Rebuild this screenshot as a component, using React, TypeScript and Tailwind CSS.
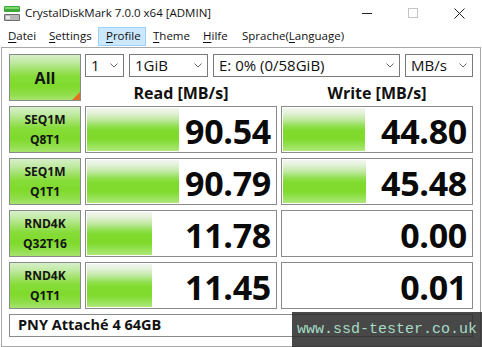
import React from "react";

const Chevron = () => (
  <svg width="8" height="5" viewBox="0 0 8 5" className="shrink-0">
    <polyline points="0.5,0.5 4,4 7.5,0.5" fill="none" stroke="#6a6a6a" strokeWidth="1" />
  </svg>
);

function Combo({ w, text }: { w: string; text: string }) {
  return (
    <div className={`${w} h-[23px] border border-[#7a7a7a] bg-white flex items-center justify-between pl-[5px] pr-[5px]`}>
      <span className="text-[15px] leading-none text-[#111]">{text}</span>
      <Chevron />
    </div>
  );
}

const barBg =
  "bg-[linear-gradient(180deg,#f3f6f1_0%,#e2f1d8_12%,#bfe99e_28%,#96e05a_40%,#80db2e_52%,#7fda2c_72%,#93e150_86%,#aee97c_100%)]";
const labelBg =
  "bg-[linear-gradient(180deg,#d6efc8_0%,#c2eba6_15%,#a2e26c_32%,#86dc38_48%,#7fda2c_70%,#8fde48_86%,#a4e46c_100%)]";

function Label({ a, b }: { a: string; b: string }) {
  return (
    <div className={`h-[47px] border border-[#8a8a8a] ${labelBg} flex flex-col items-center justify-center text-[12px] font-bold text-[#141414]`}>
      <span className="leading-[20px]">{a}</span>
      <span className="leading-[20px]">{b}</span>
    </div>
  );
}

function Meter({ value, bar }: { value: string; bar: number }) {
  return (
    <div className="relative h-[47px] border border-[#8a8a8a] bg-white p-[1px]">
      <div className={`h-full ${barBg}`} style={{ width: `${bar}px` }} />
      <div className="absolute inset-0 flex items-center justify-end pr-[5px] pt-[3px]">
        <span className="text-[34px] font-bold leading-none text-[#0a0a0a] tracking-[-0.3px]">{value}</span>
      </div>
    </div>
  );
}

function MenuItem({ w, pre, u, post, active }: { w: string; pre?: string; u: string; post: string; active?: boolean }) {
  return (
    <div
      className={`${w} h-[19px] flex items-center pl-[7px] pb-[2px] ${
        active ? "bg-[#cce8ff] border border-[#99d1ff] pl-[6px]" : ""
      }`}
    >
      <span className="text-[11.5px] leading-none text-[#111] whitespace-nowrap">
        {pre}
        <span className="underline underline-offset-[2px] decoration-[1px]">{u}</span>
        {post}
      </span>
    </div>
  );
}

export default function App() {
  return (
    <div className="relative w-[482px] h-[347px] bg-white overflow-hidden font-['Open_Sans','Noto_Sans',sans-serif]">
      {/* Title bar */}
      <div className="h-[26px] flex items-center">
        <svg width="17" height="17" viewBox="0 0 17 17" className="ml-[4px]">
          <rect x="0" y="1" width="16" height="6" rx="1" fill="#3da83a" />
          <rect x="1" y="2" width="14" height="2" fill="#7fd86a" />
          <rect x="0" y="9" width="16" height="7" rx="1" fill="#6e6e6e" />
          <rect x="1" y="10" width="14" height="5" fill="#b8b8b8" />
          <rect x="2" y="11" width="4" height="3" fill="#e8e8e8" />
        </svg>
        <span className="ml-[4px] text-[11.5px] leading-none text-[#111]">CrystalDiskMark 7.0.0 x64 [ADMIN]</span>
        <div className="ml-auto flex items-center h-full">
          <div className="w-[46px] h-full flex items-center justify-center">
            <div className="w-[10px] h-[1px] bg-[#222]" />
          </div>
          <div className="w-[46px] h-full flex items-center justify-center">
            <div className="w-[10px] h-[10px] border border-[#c4c4c4]" />
          </div>
          <div className="w-[46px] h-full flex items-center justify-center">
            <svg width="11" height="11" viewBox="0 0 11 11">
              <path d="M0.5 0.5 L10.5 10.5 M10.5 0.5 L0.5 10.5" stroke="#222" strokeWidth="1" />
            </svg>
          </div>
        </div>
      </div>

      {/* Menu bar */}
      <div className="h-[21px] flex items-start pt-[1px] pl-[1px]">
        <MenuItem w="w-[41px]" u="D" post="atei" />
        <MenuItem w="w-[56px]" u="S" post="ettings" />
        <MenuItem w="w-[48px]" u="P" post="rofile" active />
        <MenuItem w="w-[50px]" u="T" post="heme" />
        <MenuItem w="w-[39px]" u="H" post="ilfe" />
        <MenuItem w="w-[115px]" pre="Sprache(" u="L" post="anguage)" />
      </div>

      {/* Client area */}
      <div className="ml-[1px] w-[480px] h-[300px] border border-[#a8a8a8] pt-[6px] pl-[7px]">
        <div className="grid grid-cols-[72px_192px_192px] gap-x-[4px] gap-y-[5px] auto-rows-[47px]">
          {/* All button */}
          <div className={`relative h-[47px] border border-[#8a8a8a] ${labelBg} flex items-center justify-center`}>
            <span className="text-[16px] font-bold leading-none text-[#141414]">All</span>
            <svg width="8" height="8" viewBox="0 0 8 8" className="absolute right-0 bottom-0">
              <polygon points="8,0 8,8 0,8" fill="#e2731e" />
            </svg>
          </div>
          <div className="col-span-2 flex flex-col">
            <div className="flex gap-x-[5px]">
              <Combo w="w-[39px]" text="1" />
              <Combo w="w-[79px]" text="1GiB" />
              <Combo w="w-[187px]" text="E: 0% (0/58GiB)" />
              <Combo w="w-[68px]" text="MB/s" />
            </div>
            <div className="flex gap-x-[4px] h-[24px]">
              <div className="w-[192px] flex items-end justify-center">
                <span className="text-[16px] font-bold leading-none text-[#111]">Read [MB/s]</span>
              </div>
              <div className="w-[192px] flex items-end justify-center">
                <span className="text-[16px] font-bold leading-none text-[#111]">Write [MB/s]</span>
              </div>
            </div>
          </div>

          <Label a="SEQ1M" b="Q8T1" />
          <Meter value="90.54" bar={92} />
          <Meter value="44.80" bar={82} />

          <Label a="SEQ1M" b="Q1T1" />
          <Meter value="90.79" bar={92} />
          <Meter value="45.48" bar={83} />

          <Label a="RND4K" b="Q32T16" />
          <Meter value="11.78" bar={65} />
          <Meter value="0.00" bar={0} />

          <Label a="RND4K" b="Q1T1" />
          <Meter value="11.45" bar={65} />
          <Meter value="0.01" bar={0} />

          <div className="col-span-3 h-[23px] border border-[#8a8a8a] bg-white flex items-center pl-[8px]">
            <span className="text-[14.5px] font-bold leading-none text-[#111]">PNY Attaché 4 64GB</span>
          </div>
        </div>
      </div>

      {/* Watermark */}
      <div className="absolute left-[292px] top-[312px] w-[190px] h-[35px] bg-[rgba(42,42,42,0.86)] flex items-center pl-[5px]">
        <span className="font-['Liberation_Mono',monospace] text-[15px] leading-none text-[#a6dcc6]">www.ssd-tester.co.uk</span>
      </div>
    </div>
  );
}
